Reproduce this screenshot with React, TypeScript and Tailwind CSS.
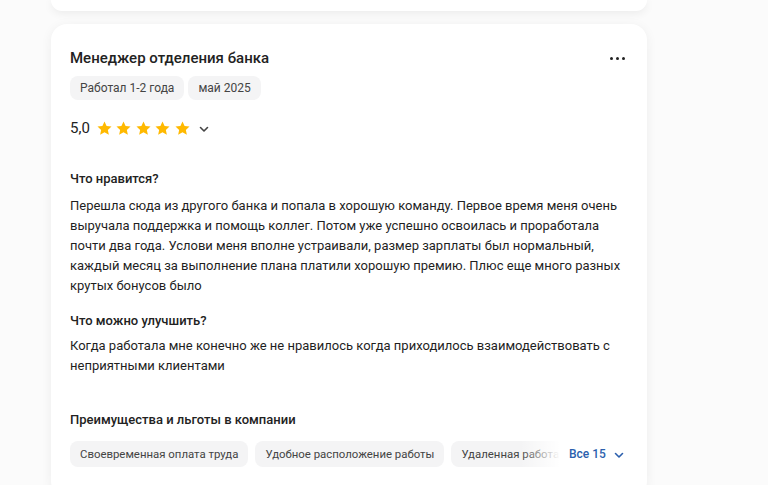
import React from "react";

const Star = () => (
  <svg width="17" height="17" viewBox="0 0 24 24" className="shrink-0">
    <path
      d="M12 2.2l2.95 6.36 6.95.78-5.17 4.72 1.42 6.85L12 17.4l-6.15 3.51 1.42-6.85L2.1 9.34l6.95-.78L12 2.2z"
      fill="#ffb900"
    />
  </svg>
);

const Chevron = ({ color = "#444", size = 12 }: { color?: string; size?: number }) => (
  <svg width={size} height={size} viewBox="0 0 12 12" fill="none">
    <path d="M2.5 4.5L6 8l3.5-3.5" stroke={color} strokeWidth="1.6" strokeLinecap="round" strokeLinejoin="round" />
  </svg>
);

export default function App() {
  const font = { fontFamily: "Roboto, 'Noto Sans', Arial, sans-serif" };
  return (
    <div className="w-[768px] h-[485px] overflow-hidden bg-[#fbfbfb] text-[#222]" style={font}>
      <div className="ml-[51px] w-[596px] flex flex-col gap-[13px]">
        <div className="h-[11px] bg-white rounded-b-[16px] shadow-[0_2px_10px_rgba(0,0,0,0.07)]" />
        <div className="bg-white rounded-[16px] shadow-[0_2px_12px_rgba(0,0,0,0.06)] px-[19px] pt-[24px] pb-[30px]">
          <div className="flex items-center justify-between">
            <div className="text-[15px] leading-[20px] font-medium text-[#222]">Менеджер отделения банка</div>
            <div className="flex gap-[3px] mr-[3px]">
              <span className="w-[3px] h-[3px] rounded-full bg-[#222]" />
              <span className="w-[3px] h-[3px] rounded-full bg-[#222]" />
              <span className="w-[3px] h-[3px] rounded-full bg-[#222]" />
            </div>
          </div>
          <div className="flex gap-[4px] mt-[8px]">
            <span className="h-[24px] px-[10px] rounded-[8px] bg-[#f4f4f5] text-[12px] leading-[24px] text-[#444]">Работал 1-2 года</span>
            <span className="h-[24px] px-[10px] rounded-[8px] bg-[#f4f4f5] text-[12px] leading-[24px] text-[#444]">май 2025</span>
          </div>
          <div className="flex items-center mt-[16px] h-[24px]">
            <span className="text-[15px] leading-[24px] text-[#222] mr-[6px]">5,0</span>
            <div className="flex gap-[2.5px]">
              <Star />
              <Star />
              <Star />
              <Star />
              <Star />
            </div>
            <span className="ml-[7px] mt-[1px]">
              <Chevron />
            </span>
          </div>
          <div className="mt-[29px] text-[13px] leading-[20px] font-medium">Что нравится?</div>
          <p className="mt-[7px] text-[13px] leading-[20px] text-[#1f1f1f]">
            Перешла сюда из другого банка и попала в хорошую команду. Первое время меня очень выручала поддержка и помощь коллег. Потом уже успешно освоилась и проработала почти два года. Услови меня вполне устраивали, размер зарплаты был нормальный, каждый месяц за выполнение плана платили хорошую премию. Плюс еще много разных крутых бонусов было
          </p>
          <div className="mt-[15px] text-[13px] leading-[20px] font-medium">Что можно улучшить?</div>
          <p className="mt-[5px] text-[13px] leading-[20px] text-[#1f1f1f]">
            Когда работала мне конечно же не нравилось когда приходилось взаимодействовать с неприятными клиентами
          </p>
          <div className="mt-[34px] text-[13px] leading-[20px] font-medium">Преимущества и льготы в компании</div>
          <div className="flex items-center mt-[11px]">
            <div className="relative w-[490px] overflow-hidden">
              <div className="flex gap-[7px] whitespace-nowrap">
                <span className="h-[26px] px-[10px] rounded-[8px] bg-[#f4f4f5] text-[11.4px] leading-[26px] text-[#444] shrink-0">Своевременная оплата труда</span>
                <span className="h-[26px] px-[10px] rounded-[8px] bg-[#f4f4f5] text-[11.4px] leading-[26px] text-[#444] shrink-0">Удобное расположение работы</span>
                <span className="h-[26px] px-[10px] rounded-[8px] bg-[#f4f4f5] text-[11.4px] leading-[26px] text-[#444] shrink-0">Удаленная работа</span>
              </div>
              <div className="absolute right-0 top-0 h-full w-[40px] bg-gradient-to-r from-white/0 to-white" />
            </div>
            <span className="ml-[9px] text-[12px] font-medium text-[#2b5fad]">Все 15</span>
            <span className="ml-[7px] mt-[1px]">
              <Chevron color="#2b5fad" />
            </span>
          </div>
        </div>
      </div>
    </div>
  );
}
